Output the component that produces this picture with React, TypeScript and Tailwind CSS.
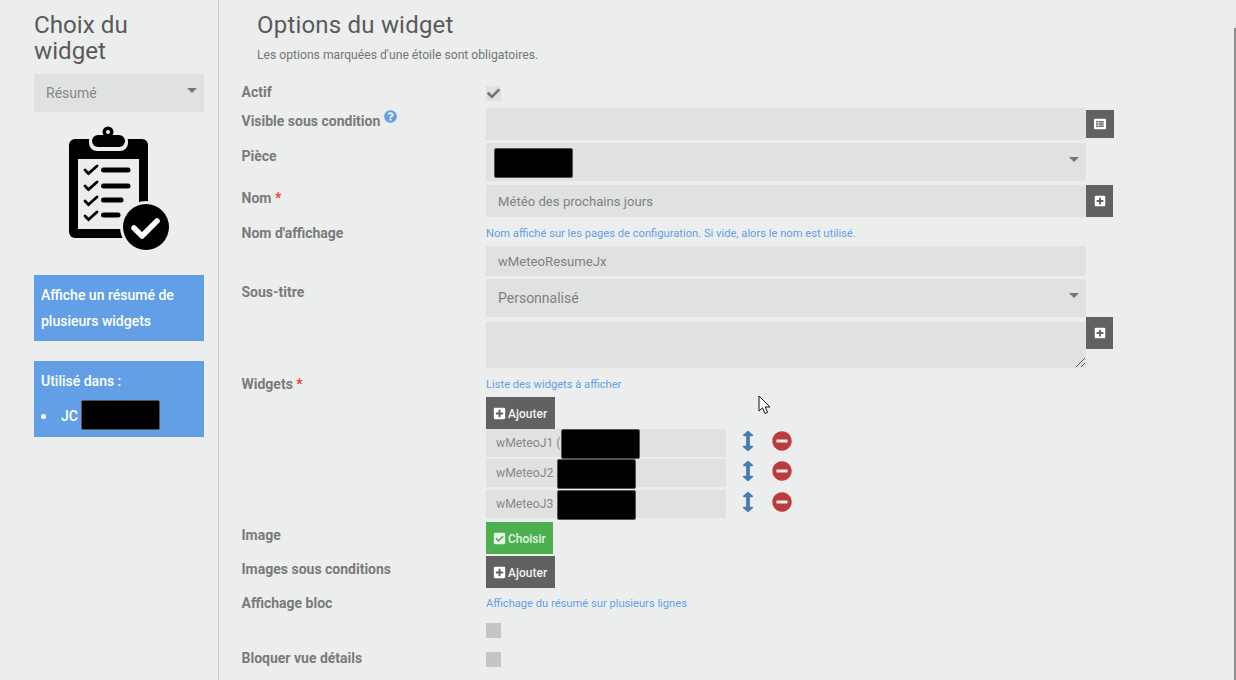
import type { ReactNode } from "react";
import {
  FaArrowsAltV,
  FaCheck,
  FaCheckSquare,
  FaListAlt,
  FaMinusCircle,
  FaPlusSquare,
  FaQuestionCircle,
} from "react-icons/fa";

function Redact({ className }: { className: string }) {
  return <span className={`absolute rounded-[2px] border border-[#555] bg-black ${className}`} />;
}

function Caret() {
  return (
    <svg viewBox="0 0 10 5" className="absolute top-[14px] right-[7px] h-[5px] w-[10px] fill-[#757575]">
      <path d="M0 0h10L5 5z" />
    </svg>
  );
}

function Row({
  label,
  required,
  extra,
  labelTop = "pt-0",
  className = "",
  children,
}: {
  label?: string;
  required?: boolean;
  extra?: ReactNode;
  labelTop?: string;
  className?: string;
  children: ReactNode;
}) {
  return (
    <div className={`flex ${className}`}>
      <div className={`w-[245px] shrink-0 pl-[0.5px] text-[14px] leading-[16px] font-bold text-[#7a7a7a] ${labelTop}`}>
        {label}
        {required && <span className="text-[#f44336]"> *</span>}
        {extra}
      </div>
      <div className="relative flex items-start">{children}</div>
    </div>
  );
}

function Hint({ children }: { children: ReactNode }) {
  return <div className="pt-[1px] text-[11.17px] leading-[15px] text-[#629fe6]">{children}</div>;
}

function SquareBtn({ w, h, children }: { w: string; h: string; children: ReactNode }) {
  return (
    <div className={`flex items-center justify-center bg-[#616161] text-[12px] text-white ${w} ${h}`}>
      {children}
    </div>
  );
}

function AddBtn() {
  return (
    <div className="flex h-[32px] w-[69px] items-center gap-[2px] bg-[#616161] pl-[7px] text-[12px] font-medium text-[#f2f2f2]">
      <FaPlusSquare className="text-[13px] text-white" />
      <span className="pt-[1px]">Ajouter</span>
    </div>
  );
}

function WidgetLine({
  name,
  redact,
  className = "",
}: {
  name: string;
  redact: string;
  className?: string;
}) {
  return (
    <div className={`flex items-start ${className}`}>
      <div className="relative flex h-[28px] w-[240px] items-center bg-[#e0e2e2] pl-[10px] text-[12.2px] text-[#888]">
        {name}
        <Redact className={redact} />
      </div>
      <FaArrowsAltV
        preserveAspectRatio="none"
        className="mt-[2px] ml-[16px] h-[20px] w-[12px] text-[#4a7ab5]"
      />
      <FaMinusCircle className="mt-[2px] ml-[18px] h-[20px] w-[20px] text-[#bd3a3f]" />
    </div>
  );
}

function ClipboardIcon() {
  return (
    <svg viewBox="0 0 116 126" className="h-[126px] w-[116px]">
      <rect x="7" y="14" width="79" height="99" rx="6" fill="#000" />
      <rect x="16" y="34" width="61" height="70" fill="#eceeee" />
      <rect x="27" y="8" width="39" height="18" rx="8" fill="#eceeee" />
      <circle cx="46" cy="7" r="7" fill="#eceeee" />
      <circle cx="46" cy="7" r="5.5" fill="#000" />
      <circle cx="46" cy="7" r="2" fill="#eceeee" />
      <rect x="30" y="10" width="33" height="12" rx="6" fill="#000" />
      <g stroke="#000" strokeLinecap="round" fill="none">
        <g strokeWidth="5">
          <path d="M41.5 45H66" />
          <path d="M41.5 61H66" />
          <path d="M41.5 75H59" />
          <path d="M41.5 90H56" />
        </g>
        <g strokeWidth="2.8">
          <path d="M23 45l3.5 3.5L35 41" />
          <path d="M23 61l3.5 3.5L35 57" />
          <path d="M23 76l3.5 3.5L35 72" />
          <path d="M23 91l3.5 3.5L35 87" />
        </g>
      </g>
      <circle cx="84" cy="102" r="26" fill="#eceeee" />
      <circle cx="84" cy="102" r="23" fill="#000" />
      <path d="M72 103l8 8 15-15" stroke="#fff" strokeWidth="5.5" strokeLinecap="round" strokeLinejoin="round" fill="none" />
    </svg>
  );
}

function Sidebar() {
  return (
    <aside className="h-[680px] w-[219px] shrink-0 border-r border-[#c8c8c8] pt-[12px] pl-[34px]">
      <h2 className="w-[170px] text-[24.2px] leading-[26px] font-normal text-[#5a5a5a]">Choix du widget</h2>
      <div className="relative mt-[10px] flex h-[38px] w-[170px] items-center bg-[#e0e2e2] pl-[12px] text-[14px] text-[#888]">
        Résumé
        <Caret />
      </div>
      <div className="mt-[13px] ml-[28px]">
        <ClipboardIcon />
      </div>
      <div className="mt-[24px] w-[170px] bg-[#629fe6] px-[7px] py-[7px] text-[14px] leading-[26px] font-medium text-white">
        Affiche un résumé de plusieurs widgets
      </div>
      <div className="relative mt-[20px] h-[76px] w-[170px] bg-[#629fe6] px-[7px] pt-[7px] text-[14px] leading-[26px] font-medium text-white">
        Utilisé dans :
        <ul className="mt-[9px] flex items-center">
          <li className="h-[5px] w-[5px] rounded-full bg-white" />
          <li className="ml-[15px]">JC</li>
        </ul>
        <Redact className="top-[39px] left-[47px] h-[30px] w-[79px]" />
      </div>
    </aside>
  );
}

function OptionsForm() {
  return (
    <main className="relative pl-[22px]">
      <div className="pl-[16px]">
        <h1 className="pt-[12px] text-[24px] leading-[26px] font-normal tracking-[0.2px] text-[#5a5a5a]">
          Options du widget
        </h1>
        <p className="mt-[9px] text-[12.17px] leading-[16px] text-[#757575]">
          Les options marquées d'une étoile sont obligatoires.
        </p>
      </div>

      <Row label="Actif" labelTop="-mt-[2px]" className="mt-[23px] h-[15px]">
        <div className="flex h-[15px] w-[15px] items-center justify-center bg-[#e0e2e2]">
          <FaCheck className="text-[13px] text-[#757575]" />
        </div>
      </Row>

      <Row
        label="Visible sous condition"
        labelTop="pt-[5px]"
        className="mt-[7px]"
        extra={
          <FaQuestionCircle className="relative -top-[3px] ml-[4px] inline text-[13px] text-[#629fe6] align-top" />
        }
      >
        <div className="h-[32px] w-[600px] bg-[#e0e2e2]" />
        <div className="mt-[2px]">
          <SquareBtn w="w-[28px]" h="h-[28px]">
            <FaListAlt />
          </SquareBtn>
        </div>
      </Row>

      <Row label="Pièce" labelTop="pt-[5px]" className="mt-[3px]">
        <div className="relative h-[38px] w-[600px] bg-[#e0e2e2]">
          <Redact className="top-[5px] left-[8px] h-[30px] w-[79px]" />
          <Caret />
        </div>
      </Row>

      <Row label="Nom" required labelTop="pt-[5px]" className="mt-[4px]">
        <div className="flex h-[32px] w-[600px] items-center bg-[#e0e2e2] pt-[1px] pl-[12px] text-[13.15px] text-[#808080]">
          Météo des prochains jours
        </div>
        <SquareBtn w="w-[27px]" h="h-[32px]">
          <FaPlusSquare />
        </SquareBtn>
      </Row>

      <Row label="Nom d'affichage" className="mt-[8px]">
        <Hint>Nom affiché sur les pages de configuration. Si vide, alors le nom est utilisé.</Hint>
      </Row>

      <Row className="mt-[5px]">
        <div className="flex h-[30px] w-[600px] items-center bg-[#e0e2e2] pt-[1px] pl-[12px] text-[13.15px] text-[#808080]">
          wMeteoResumeJx
        </div>
      </Row>

      <Row label="Sous-titre" labelTop="pt-[5px]" className="mt-[3px]">
        <div className="relative flex h-[38px] w-[600px] items-center bg-[#e0e2e2] pl-[12px] text-[14px] text-[#808080]">
          Personnalisé
          <Caret />
        </div>
      </Row>

      <Row className="mt-[5px] h-[46px]">
        <div className="relative h-[46px] w-[600px] bg-[#e0e2e2]">
          <svg viewBox="0 0 9 9" className="absolute right-[1px] bottom-[1px] h-[9px] w-[9px] stroke-[#555]">
            <path d="M0 9L9 0M5 9L9 5" />
          </svg>
        </div>
        <div className="-mt-[5px]">
          <SquareBtn w="w-[27px]" h="h-[32px]">
            <FaPlusSquare />
          </SquareBtn>
        </div>
      </Row>

      <Row label="Widgets" required className="mt-[8px]">
        <Hint>Liste des widgets à afficher</Hint>
      </Row>

      <Row className="mt-[5px]">
        <AddBtn />
      </Row>

      <Row>
        <div>
          <WidgetLine name="wMeteoJ1 (" redact="top-0 left-[75px] h-[30px] w-[79px]" />
          <WidgetLine name="wMeteoJ2" redact="top-0 left-[71px] h-[30px] w-[79px]" className="mt-[2px]" />
          <WidgetLine name="wMeteoJ3" redact="top-0 left-[71px] h-[30px] w-[79px]" className="mt-[3px]" />
        </div>
      </Row>

      <Row label="Image" labelTop="pt-[5px]" className="mt-[4px]">
        <div className="flex h-[32px] w-[67px] items-center gap-[2px] bg-[#4caf50] pl-[7px] text-[12px] font-medium text-[#e4f3e5]">
          <FaCheckSquare className="text-[13px]" />
          <span className="pt-[1px]">Choisir</span>
        </div>
      </Row>

      <Row label="Images sous conditions" labelTop="pt-[5px]" className="mt-[2px]">
        <AddBtn />
      </Row>

      <Row label="Affichage bloc" className="mt-[7px]">
        <Hint>Affichage du résumé sur plusieurs lignes</Hint>
      </Row>

      <Row className="mt-[12px]">
        <div className="h-[15px] w-[15px] bg-[#c5c5c5]" />
      </Row>

      <Row label="Bloquer vue détails" labelTop="-mt-[2px]" className="mt-[14px]">
        <div className="h-[15px] w-[15px] bg-[#c5c5c5]" />
      </Row>

      {/* mouse pointer caught in the capture */}
      <svg viewBox="0 0 13 20" className="absolute top-[395px] left-[539px] h-[20px] w-[13px]">
        <path d="M1 1v15l3.5-3.2L7 18.5l2.6-1.2L7.2 12H12z" fill="#fff" stroke="#111" strokeWidth="1" strokeLinejoin="round" />
      </svg>
    </main>
  );
}

export default function App() {
  return (
    <div className="relative flex h-[680px] w-[1236px] overflow-hidden bg-[#eceeee] font-['Roboto',sans-serif]">
      <Sidebar />
      <OptionsForm />
      <div className="absolute top-[28px] right-0 bottom-0 w-[2px] bg-[#8a8c8e]" />
    </div>
  );
}
